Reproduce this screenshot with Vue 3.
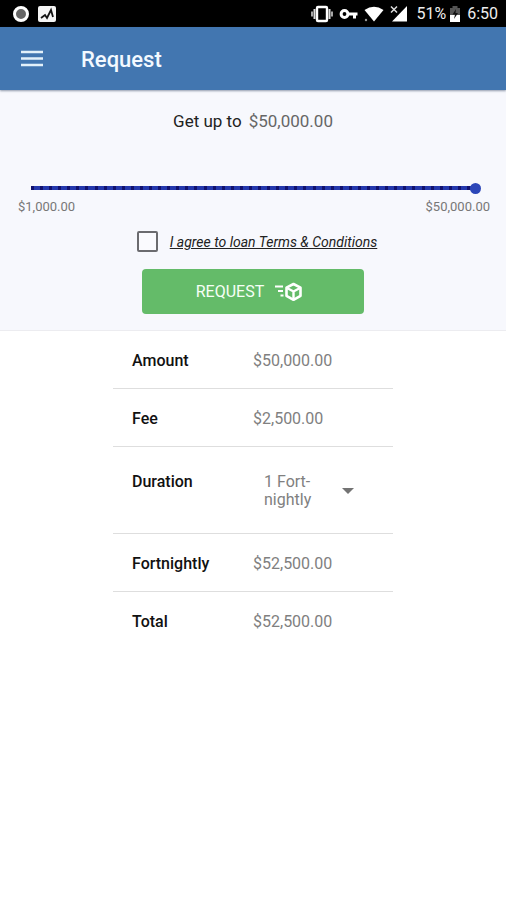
<script setup>
import { ref, computed } from 'vue'

const min = 1000
const max = 50000
const amount = ref(50000)
const agreed = ref(false)
const duration = ref('1')

const money = (n) =>
  '$' + Number(n).toLocaleString('en-US', { minimumFractionDigits: 2, maximumFractionDigits: 2 })
const fee = computed(() => amount.value * 0.05)
const total = computed(() => Number(amount.value) + fee.value)
</script>

<template>
  <div class="screen">
    <div class="status">
      <div class="group">
        <svg width="18" height="18" viewBox="0 0 18 18">
          <circle cx="9" cy="9" r="6.5" fill="#666" stroke="#fff" stroke-width="3" />
        </svg>
        <svg width="18" height="16" viewBox="0 0 18 16">
          <rect width="18" height="16" rx="2" fill="#f4f4f4" />
          <path d="M3 12l4-3 2 3 4-8 2 7" fill="none" stroke="#111" stroke-width="1.8" />
        </svg>
      </div>
      <div class="group right">
        <svg width="22" height="18" viewBox="0 0 22 18">
          <rect x="6" y="2" width="10" height="14" rx="1" fill="none" stroke="#fff" stroke-width="2.4" />
          <path d="M3.5 4v10M18.5 4v10" stroke="#ddd" stroke-width="2" />
          <path d="M1 6.5v5M21 6.5v5" stroke="#ddd" stroke-width="1.5" />
        </svg>
        <svg width="19" height="18" viewBox="0 0 19 18">
          <circle cx="5.5" cy="9" r="3.4" fill="none" stroke="#fff" stroke-width="3" />
          <path d="M9 9h9.5M15.500 9v4.500" stroke="#fff" stroke-width="3" fill="none" />
        </svg>
        <svg width="20" height="18" viewBox="0 0 20 18">
          <path d="M0.500 5Q10 -1.500 19.500 5L10 16.500z" fill="#fff" />
          <circle cx="2" cy="15" r="1.200" fill="#999" />
        </svg>
        <svg width="18" height="18" viewBox="0 0 18 18">
          <path d="M17 1v15.500H2z" fill="#fff" />
          <path d="M1 1.500l6 6M7 1.500l-6 6" stroke="#ddd" stroke-width="1.500" />
        </svg>
        <span class="percent">51%</span>
        <svg width="12" height="18" viewBox="0 0 12 18">
          <path d="M3.500 1h5v2H11v14H1V3h2.500z" fill="#555" />
          <path d="M1 10h10v7H1z" fill="#fff" />
          <path d="M7 4L3.500 9.500H6L5 14l4-6H6.500z" fill="#111" />
        </svg>
        <span class="clock">6:50</span>
      </div>
    </div>

    <header class="bar">
      <button class="menu" type="button" aria-label="Menu">
        <svg width="22" height="17" viewBox="0 0 22 17">
          <path d="M0 2h22M0 8.500h22M0 15h22" stroke="#e3f1fa" stroke-width="2.600" />
        </svg>
      </button>
      <h1>Request</h1>
    </header>

    <section class="panel">
      <p class="headline"><label for="amount">Get up to</label> <output for="amount">{{ money(amount) }}</output></p>
      <input id="amount" v-model="amount" class="slider" type="range" :min="min" :max="max" step="1000" />
      <div class="limits"><span>{{ money(min) }}</span><span>{{ money(max) }}</span></div>
      <div class="agree">
        <input id="terms" v-model="agreed" type="checkbox" />
        <label for="terms">I agree to loan Terms &amp; Conditions</label>
      </div>
      <button class="submit" type="button">
        REQUEST
        <svg width="27" height="20" viewBox="0 0 27 20">
          <g fill="none" stroke="#fff" stroke-width="2">
            <path d="M0 4.500h8M3 9h5M5.500 13.500h3" />
            <path d="M18.500 2l7 3.700v8.100l-7 4-7-4V5.700z" stroke-width="2.600" stroke-linejoin="round" />
            <path d="M12 6l6.500 3.500L25 6M18.500 9.500V17" stroke-width="2.400" />
          </g>
        </svg>
      </button>
    </section>

    <table class="summary">
      <tbody>
        <tr><th scope="row">Amount</th><td>{{ money(amount) }}</td></tr>
        <tr><th scope="row">Fee</th><td>{{ money(fee) }}</td></tr>
        <tr class="tall">
          <th scope="row"><label for="duration">Duration</label></th>
          <td>
            <div class="picker">
              <select id="duration" v-model="duration">
                <option value="1">1 Fort-nightly</option>
              </select>
              <svg width="12" height="6" viewBox="0 0 12 6"><path d="M0 0h12L6 6z" fill="#737373" /></svg>
            </div>
          </td>
        </tr>
        <tr><th scope="row">Fortnightly</th><td>{{ money(total) }}</td></tr>
        <tr><th scope="row">Total</th><td>{{ money(total) }}</td></tr>
      </tbody>
    </table>
  </div>
</template>

<style>
body {
  background: #fff;
}
</style>

<style scoped>
.screen {
  font-family: Roboto, "Liberation Sans", sans-serif;
  color: #222;
}
.status {
  display: flex;
  justify-content: space-between;
  align-items: center;
  height: 27px;
  padding: 0 8px 0 12px;
  background: #000;
  color: #eee;
  font-size: 16px;
}
.group {
  display: flex;
  align-items: center;
  gap: 8px;
}
.right {
  gap: 6px;
}
.percent {
  margin-left: 2px;
}
.group .percent + svg {
  margin-left: -3px;
}
.bar {
  display: flex;
  align-items: center;
  gap: 38px;
  height: 63px;
  padding: 0 21px;
  background: #4276b0;
  box-shadow: 0 1px 2px rgba(40, 60, 90, 0.5);
  position: relative;
}
.menu {
  display: flex;
  padding: 0;
  border: 0;
  background: none;
}
h1 {
  margin: 0;
  padding-top: 2px;
  color: #f3f9ff;
  font-size: 22px;
  font-weight: 500;
}
.panel {
  display: flex;
  flex-direction: column;
  align-items: center;
  padding: 19px 16px 16px;
  background: #f7f8fd;
  border-bottom: 1px solid #ececf0;
}
.headline {
  display: flex;
  gap: 7px;
  margin: 0;
  font-size: 17px;
  line-height: 24px;
}
.headline output {
  color: #666;
}
.slider {
  appearance: none;
  width: calc(100% - 18px);
  height: 12px;
  margin: 49px 0 0;
  background: repeating-linear-gradient(to right, #12126e 0 3px, #2438ac 3px calc(100% / 49)) center / calc(100% - 11px) 4px no-repeat;
}
.slider::-webkit-slider-thumb {
  appearance: none;
  width: 11px;
  height: 11px;
  border-radius: 50%;
  background: #2c46b8;
}
.limits {
  display: flex;
  justify-content: space-between;
  align-self: stretch;
  margin: 5px 0 0 2px;
  font-size: 13px;
  line-height: 16px;
  color: #777;
}
.agree {
  display: flex;
  align-items: center;
  gap: 12px;
  margin-top: 16px;
  padding-left: 8px;
}
.agree input {
  appearance: none;
  width: 21px;
  height: 21px;
  margin: 0;
  border: 2px solid #6b6b6f;
  border-radius: 2px;
  background: #fafafe;
}
.agree input:checked {
  background: #2c46b8;
}
.agree label {
  font-size: 14px;
  font-style: italic;
  text-decoration: underline;
}
.submit {
  display: flex;
  align-items: center;
  justify-content: center;
  gap: 11px;
  width: 47%;
  height: 45px;
  margin-top: 17px;
  padding: 0 8px 0 0;
  border: 0;
  border-radius: 4px;
  background: #64bb69;
  color: #f6fff6;
  font-family: inherit;
  font-size: 16px;
}
.summary {
  width: 280px;
  margin: 0 auto;
  border-collapse: collapse;
  font-size: 16px;
  line-height: 18px;
}
th,
td {
  height: 55px;
  padding: 2px 0 0;
  border-bottom: 1px solid #dedede;
  text-align: left;
}
tr:last-child > * {
  border-bottom: 0;
}
th {
  width: 121px;
  padding-left: 19px;
  color: #111;
  font-weight: 500;
}
td {
  color: #808080;
}
.tall > * {
  height: 60px;
  padding-top: 26px;
  vertical-align: top;
}
.picker {
  display: flex;
  align-items: center;
  gap: 20px;
  padding-left: 11px;
}
select {
  appearance: none;
  width: 58px;
  height: 36px;
  padding: 0;
  border: 0;
  background: none;
  color: inherit;
  font: inherit;
  line-height: 18px;
  white-space: normal;
}
</style>
